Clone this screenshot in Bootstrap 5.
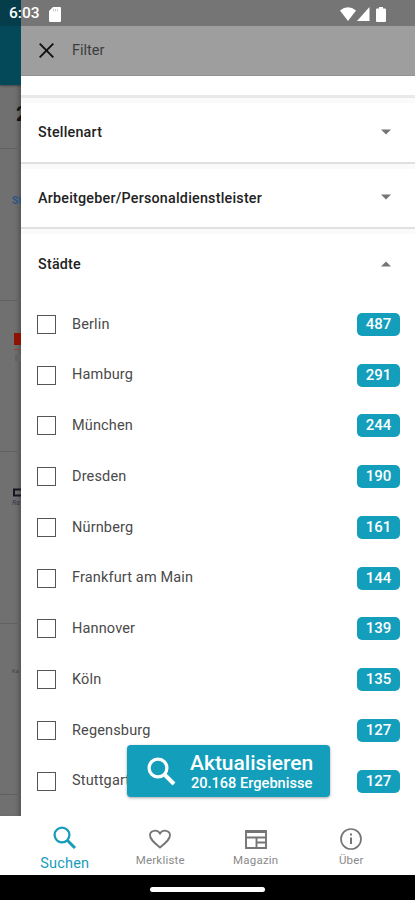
<!DOCTYPE html>
<html lang="de">
<head>
<meta charset="utf-8">
<meta name="viewport" content="width=device-width, initial-scale=1">
<title>Filter</title>
<link href="https://cdn.jsdelivr.net/npm/bootstrap@5.3.0/dist/css/bootstrap.min.css" rel="stylesheet">
<style>
body{font-family:Roboto,"Liberation Sans",sans-serif;background:#fff;color:#222;overflow:hidden;line-height:1}
svg{display:block;flex:none}
.screen{width:415px;height:900px}
.statusbar{height:26px;background:#757575;padding:2px 29px 0 9px;font-size:15.5px;font-weight:500}
.statusbar .dim{position:absolute;left:0;top:0;width:21px;height:26px;background:#053d4b}
.sdcard{margin-left:9px}
.battery{margin-left:6px}
.main{height:790px}
.behind{width:21px;background:#707070;box-shadow:inset -5px 0 5px -3px rgba(0,0,0,.28)}
.behind-head{height:59px;background:#04495a;box-shadow:0 1px 2px rgba(0,0,0,.4)}
.slot{border-bottom:1px solid #606060;flex:none}
.slot>*{white-space:nowrap;overflow:hidden;width:100%;display:block}
.slot-1{height:64px}.slot-1 span{padding:19px 0 0 16px;font-size:20px;font-weight:700;color:#111}
.slot-2{height:152px}.slot-2 span{padding:47px 0 0 12px;font-size:10px;font-weight:700;color:#2c5386}
.slot-3{height:151px}
.slot-4{height:172px}
.slot-5{height:171px}.slot-5 span{padding:44px 0 0 12px;font-size:6px;color:#444}
.drawer-head{height:50px;background:#9e9e9e;border-bottom:1px solid #929292;padding-left:18px;gap:18px;font-size:14.5px;color:#3d3d3d}
.drawer-head span{padding-top:2px}
.gapline{height:22px;border-bottom:3px solid #e9e9e9}
.section-head{height:65.5px;padding:5px 23px 0 17px;font-size:14.3px;font-weight:500;letter-spacing:.23px;border-bottom:2px solid #e0e0e0;box-shadow:inset 0 5px 0 #fafafa}
.section-head svg{margin-top:-1px}
.section-head.open{border-bottom:0;height:70px;padding-top:0}
.city{height:50.75px;padding:0 15px 0 16px;font-size:14.5px;letter-spacing:.15px;color:#4a4a4a}
.city-name{padding-top:1px}
.box{width:19px;height:19px;border:1.5px solid #555;margin-right:16px;flex:none}
.count{width:43px;height:23px;border-radius:5px;background:#139ebc;color:#fff;font-size:15px;font-weight:500;letter-spacing:0}
.update{position:absolute;left:127px;top:745px;width:203px;height:52px;border:0;border-radius:4px;background:#139ebc;color:#fff;padding:2px 16px 0 20px;gap:14px;box-shadow:0 1px 3px rgba(0,0,0,.35);font-weight:500}
.update svg{margin-top:-2px}
.update .big{font-size:21px;line-height:21px}
.update .sub{font-size:14.6px;line-height:18px}
.tabs{height:59px;background:#fff;padding:0 16px 0 17px;color:#8a8a8a;font-size:11.5px;letter-spacing:.2px}
.tabs a{color:inherit;text-decoration:none;width:95.5px;padding-top:13px;gap:6px}
.tabs .on{color:#189cb9;font-size:14.5px;padding-top:10px;gap:8px}
.tabs .info{padding-top:12px;gap:5px}
.homebar{height:25px;background:#000;padding-top:4px}
.homebar div{width:115px;height:5px;border-radius:3px;background:#fff}
</style>
</head>
<body>
<div class="screen position-relative d-flex flex-column overflow-hidden">
  <header class="statusbar position-relative d-flex align-items-center text-white">
    <div class="dim"></div>
    <span class="position-relative">6:03</span>
    <svg class="sdcard" width="12" height="15" viewBox="0 0 12 15"><path fill="#fff" d="M4 0h7q1 0 1 1v13q0 1-1 1H1q-1 0-1-1V4z"/><path stroke="#ccc" d="M4.500 2v2.500M6.500 2v2.500M8.500 2v2.500"/></svg>
    <svg class="ms-auto" width="16" height="14" viewBox="0 0 16 14"><path fill="#fff" d="M0 3.500Q8-3 16 3.500L8 14z"/></svg>
    <svg width="14" height="14" viewBox="0 0 14 14"><path fill="#fff" d="M13.500 0v14H1z"/></svg>
    <svg class="battery" width="10" height="15" viewBox="0 0 10 15"><path fill="#fff" d="M3 0h4v1.500h2q1 0 1 1V14q0 1-1 1H1q-1 0-1-1V2.500q0-1 1-1h2z"/></svg>
  </header>

  <main class="main d-flex">
    <div class="behind d-flex flex-column overflow-hidden">
      <div class="behind-head"></div>
      <div class="slot slot-1"><span>2</span></div>
      <div class="slot slot-2"><span>St</span></div>
      <div class="slot slot-3"><svg width="21" height="64" viewBox="0 0 21 64"><path fill="#8c1204" d="M14 32h7v12h-7z"/><path stroke="#8a4646" d="M14 48.500h7"/><path fill="#626262" d="M15 54h6v6h-6z"/></svg></div>
      <div class="slot slot-4"><svg width="21" height="60" viewBox="0 0 21 60"><path fill="none" stroke="#151521" stroke-width="2" d="M21 37.500h-7v6h7"/><text x="12" y="53" font-size="7" fill="#30384c" font-style="italic">Ra</text></svg></div>
      <div class="slot slot-5"><span>Ka</span></div>
    </div>

    <div class="flex-grow-1 bg-white overflow-hidden">
      <div class="drawer-head d-flex align-items-center">
        <svg width="15" height="15" viewBox="0 0 15 15"><path stroke="#111" stroke-width="1.900" d="M.7.700l13.600 13.600M14.300.700L.7 14.300"/></svg>
        <span>Filter</span>
      </div>
      <div class="gapline"></div>
      <div class="section-head d-flex align-items-center justify-content-between"><span>Stellenart</span><svg width="12" height="6" viewBox="0 0 12 6"><path fill="#757575" d="M1 .500h10l-5 5z"/></svg></div>
      <div class="section-head d-flex align-items-center justify-content-between"><span>Arbeitgeber/Personaldienstleister</span><svg width="12" height="6" viewBox="0 0 12 6"><path fill="#757575" d="M1 .500h10l-5 5z"/></svg></div>
      <div class="section-head open d-flex align-items-center justify-content-between"><span>Städte</span><svg width="12" height="6" viewBox="0 0 12 6"><path fill="#757575" d="M1 5.500h10l-5-5z"/></svg></div>
      <div class="city d-flex align-items-center"><i class="box"></i><span class="city-name">Berlin</span><span class="count ms-auto d-flex align-items-center justify-content-center">487</span></div>
      <div class="city d-flex align-items-center"><i class="box"></i><span class="city-name">Hamburg</span><span class="count ms-auto d-flex align-items-center justify-content-center">291</span></div>
      <div class="city d-flex align-items-center"><i class="box"></i><span class="city-name">München</span><span class="count ms-auto d-flex align-items-center justify-content-center">244</span></div>
      <div class="city d-flex align-items-center"><i class="box"></i><span class="city-name">Dresden</span><span class="count ms-auto d-flex align-items-center justify-content-center">190</span></div>
      <div class="city d-flex align-items-center"><i class="box"></i><span class="city-name">Nürnberg</span><span class="count ms-auto d-flex align-items-center justify-content-center">161</span></div>
      <div class="city d-flex align-items-center"><i class="box"></i><span class="city-name">Frankfurt am Main</span><span class="count ms-auto d-flex align-items-center justify-content-center">144</span></div>
      <div class="city d-flex align-items-center"><i class="box"></i><span class="city-name">Hannover</span><span class="count ms-auto d-flex align-items-center justify-content-center">139</span></div>
      <div class="city d-flex align-items-center"><i class="box"></i><span class="city-name">Köln</span><span class="count ms-auto d-flex align-items-center justify-content-center">135</span></div>
      <div class="city d-flex align-items-center"><i class="box"></i><span class="city-name">Regensburg</span><span class="count ms-auto d-flex align-items-center justify-content-center">127</span></div>
      <div class="city d-flex align-items-center"><i class="box"></i><span class="city-name">Stuttgart</span><span class="count ms-auto d-flex align-items-center justify-content-center">127</span></div>
    </div>
  </main>

  <button class="update d-flex align-items-center" type="button">
    <svg width="29" height="29" viewBox="0 0 29 29"><g fill="none" stroke="#fff" stroke-width="3.300"><circle cx="11" cy="11" r="8.900"/><path stroke-width="4" d="M17.500 17.500l9.500 9.500"/></g></svg>
    <span class="d-flex flex-column align-items-center text-nowrap"><span class="big">Aktualisieren</span><span class="sub">20.168 Ergebnisse</span></span>
  </button>

  <nav class="tabs d-flex">
    <a class="on d-flex flex-column align-items-center" href="#"><svg width="24" height="23" viewBox="0 0 24 23"><g fill="none" stroke="currentColor" stroke-width="2.300"><circle cx="9" cy="9" r="7.400"/><path stroke-width="3" d="M14.500 14.500l7.500 7.500"/></g></svg><span>Suchen</span></a>
    <a class="d-flex flex-column align-items-center" href="#"><svg width="24" height="20" viewBox="0 0 24 20"><path fill="none" stroke="#757575" stroke-width="1.800" d="M12 18.500C4 12 2 9.500 2 6.300 2 1.200 9 0 12 4.600 15 0 22 1.200 22 6.300c0 3.200-2 5.700-10 12.200z"/></svg><span>Merkliste</span></a>
    <a class="d-flex flex-column align-items-center" href="#"><svg width="22" height="20" viewBox="0 0 22 20"><path fill="none" stroke="#757575" stroke-width="1.900" d="M1 2h20v17H1zM1 3h20M1 8.500h20M11.500 8.500V19M11.500 13.500H21"/></svg><span>Magazin</span></a>
    <a class="info d-flex flex-column align-items-center" href="#"><svg width="22" height="22" viewBox="0 0 22 22"><circle cx="11" cy="11" r="10" fill="none" stroke="#757575" stroke-width="1.700"/><path stroke="#757575" stroke-width="2" d="M11 5.500v2M11 9.500v6.500"/></svg><span>Über</span></a>
  </nav>
  <div class="homebar d-flex align-items-center justify-content-center"><div></div></div>
</div>
<script src="https://cdn.jsdelivr.net/npm/bootstrap@5.3.0/dist/js/bootstrap.bundle.min.js"></script>
</body>
</html>
